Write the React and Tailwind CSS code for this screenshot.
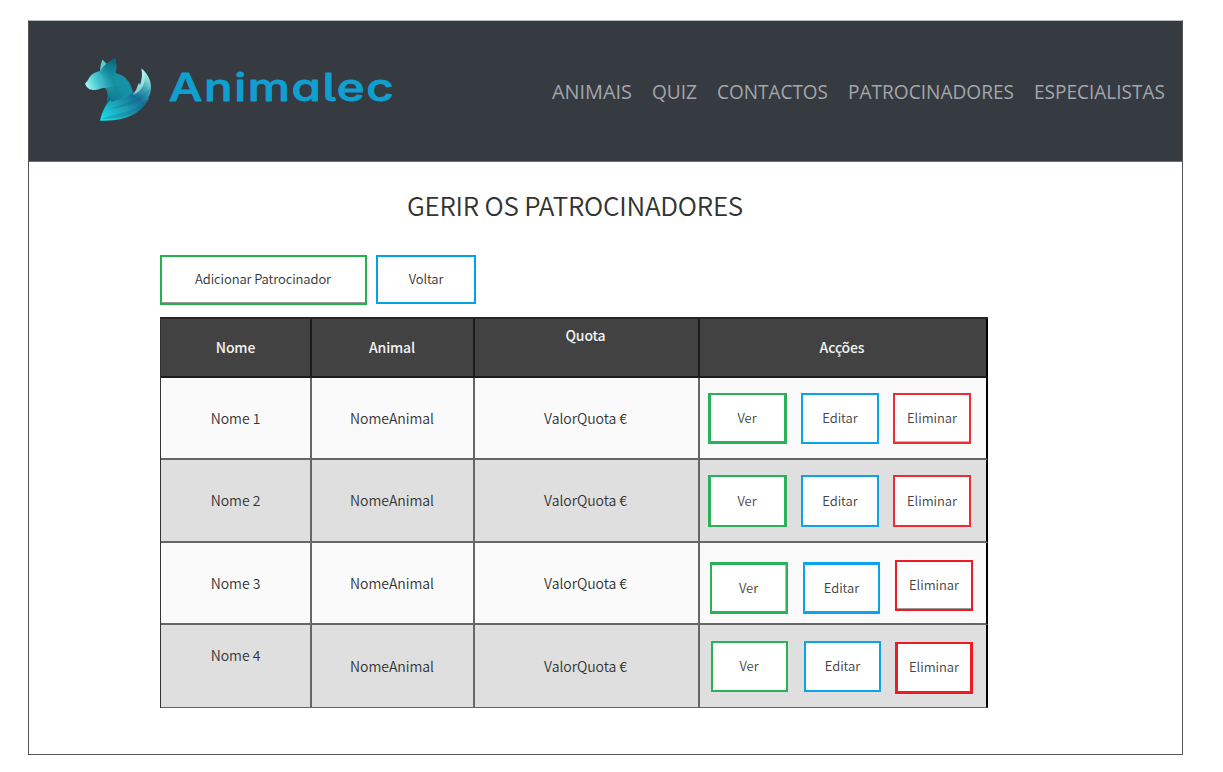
const nav = [
  ['ANIMAIS', 'w-[100px]', '80'],
  ['QUIZ', 'w-[65px]', '45'],
  ['CONTACTOS', 'w-[131px]', '111'],
  ['PATROCINADORES', 'w-[186px]', '166'],
  ['ESPECIALISTAS', 'w-[131px]', '131'],
];

const rows = [
  {
    name: 'Nome 1', box: 'h-[82px] bg-[#fafafa]', line: 'border-b-2', nameShift: '',
    actions: [
      ['Ver', 'ml-[8px] mt-[15px] w-[79px] h-[51px] border-[3px] border-t-2 border-[#2bb157] pr-[1px]'],
      ['Editar', 'ml-[14px] mt-[15px] w-[78px] h-[51px] border-2 border-[#0ba4e8] pb-[2px]'],
      ['Eliminar', 'ml-[14px] mt-[15px] w-[78px] h-[51px] border-2 border-[#ee2c35] pb-[2px] shadow-[inset_0_-1px_0_#bbb]'],
    ],
  },
  {
    name: 'Nome 2', box: 'h-[83px] bg-[#dfdfdf]', line: 'border-b-2', nameShift: '',
    actions: [
      ['Ver', 'ml-[8px] mt-[15px] w-[79px] h-[52px] border-[3px] border-y-2 border-[#2bb157] pr-[1px]'],
      ['Editar', 'ml-[14px] mt-[15px] w-[78px] h-[52px] border-2 border-[#0ba4e8] pb-[1px]'],
      ['Eliminar', 'ml-[14px] mt-[15px] w-[78px] h-[52px] border-2 border-[#ee2c35] pb-[1px]'],
    ],
  },
  {
    name: 'Nome 3', box: 'h-[82px] bg-[#fafafa]', line: 'border-b-2', nameShift: '',
    actions: [
      ['Ver', 'ml-[10px] mt-[19px] w-[78px] h-[52px] border-[3px] border-x-2 border-[#2bb157] pr-[1px] shadow-[inset_-1px_0_0_#bbb]'],
      ['Editar', 'ml-[15px] mt-[19px] w-[77px] h-[52px] border-[3px] border-x-2 border-[#0ba4e8]'],
      ['Eliminar', 'ml-[15px] mt-[17px] w-[78px] h-[51px] border-2 border-[#ed1c24] pb-[2px] shadow-[inset_0_-1px_0_#999]'],
    ],
  },
  {
    name: 'Nome 4', box: 'h-[83px] bg-[#dfdfdf]', line: 'border-b', nameShift: '-mt-[22px]',
    actions: [
      ['Ver', 'ml-[11px] mt-[16px] w-[77px] h-[51px] border-2 border-[#2bb157] pb-[2px] pr-[1px]'],
      ['Editar', 'ml-[16px] mt-[16px] w-[77px] h-[51px] border-2 border-[#0ba4e8] pb-[2px]'],
      ['Eliminar', 'ml-[14px] mt-[17px] w-[78px] h-[52px] border-[3px] border-t-2 border-[#ed1c24] pb-[1px]'],
    ],
  },
];

const cols = 'grid grid-cols-[151px_163px_225px_288px]';
const cell = 'flex items-center justify-center border-r-2';

function Fox() {
  return (
    <svg className="h-[70px] w-[75px]" viewBox="0 0 75 70">
      <defs>
        <linearGradient id="body" x1="6" y1="32" x2="42" y2="18" gradientUnits="userSpaceOnUse">
          <stop offset="0" stopColor="#a5fcf5" />
          <stop offset="0.3" stopColor="#4cc9d2" />
          <stop offset="0.7" stopColor="#168fa3" />
          <stop offset="1" stopColor="#1592a8" />
        </linearGradient>
        <linearGradient id="ear" x1="35" y1="4" x2="26" y2="28" gradientUnits="userSpaceOnUse">
          <stop offset="0" stopColor="#075f78" />
          <stop offset="1" stopColor="#1595a8" stopOpacity="0" />
        </linearGradient>
        <linearGradient id="neck" x1="28" y1="47" x2="44" y2="30" gradientUnits="userSpaceOnUse">
          <stop offset="0" stopColor="#075f78" />
          <stop offset="1" stopColor="#1595a8" stopOpacity="0" />
        </linearGradient>
        <linearGradient id="tail" x1="24" y1="66" x2="64" y2="16" gradientUnits="userSpaceOnUse">
          <stop offset="0" stopColor="#17dce6" />
          <stop offset="0.35" stopColor="#1c9fb3" />
          <stop offset="0.6" stopColor="#156f96" />
          <stop offset="0.8" stopColor="#42a8b8" />
          <stop offset="1" stopColor="#a8f8f3" />
        </linearGradient>
      </defs>
      <path d="M20 17 C20 12 21 8 22.500 4.500 L27 9.500 L25 16Z" fill="#62cbd0" />
      <path d="M5 28.500 C8 26 9 22 12 19.500 C15 17 18 16.500 20 16 C25 8.500 30 7 34.800 3.300 C36.800 8 37 14 35.500 18 C45 20 51 27 53 38 C47 45 38 46 26.500 50 C28 44 29 38 25.500 33 C21 32.500 19 35 14 35 C10 35 6.500 33 5 28.500Z" fill="url(#body)" />
      <path d="M20 17 C25 8.500 30 7 34.800 3.300 C36.800 8 37 14 35.500 18 L26 28Z" fill="url(#ear)" />
      <path d="M25.500 33 L35 31 C43 30 50 32 53 38 L32 47 L26.500 50 C28 44 29 38 25.500 33Z" fill="url(#neck)" />
      <path d="M61.500 13.500 C67 18 71 25 71 32 C71 37 69.500 41 68 43 L69 43 C60 61 43 66 20 65.800 C22 57 25 50 31 44.500 L31.500 47.500 C40 46 48 43 53.500 36 L54 38 C57 35 57 31 59 28 L60 30 C62 25 62.500 19 61.500 13.500Z" fill="url(#tail)" />
      <path d="M29 54 C42 49 59 46 70 34 C65 47 46 52 29 54Z" fill="#0c688c" opacity="0.3" />
      <path d="M22 64 C38 57 56 58 68 43 C60 61 42 63 22 64Z" fill="#0c688c" opacity="0.3" />
      <path d="M61.500 13.500 C68 22 65 35 53 40 L54 38 C57 35 57 31 59 28 L60 30 C62 25 62.500 19 61.500 13.500Z" fill="#c5fbf6" opacity="0.6" />
    </svg>
  );
}

export default function App() {
  return (
    <div className="h-[772px] w-[1223px] overflow-hidden bg-white pl-[28px] pt-[20px] font-['Noto_Sans_CJK_SC',sans-serif] text-[#333]">
      <div className="flex h-[735px] w-[1155px] flex-col border border-[#555] border-t-[#b8bfbd]">
        <header className="flex h-[141px] shrink-0 border-b border-[#6b6e70] bg-[#363a41]">
          <div className="flex shrink-0 pl-[51px] pt-[34px]">
            <Fox />
            <svg className="h-[60px] w-[240px]" viewBox="0 0 240 60" role="heading">
              <text x="11" y="46" transform="scale(1.25 1)" textLength="180" lengthAdjust="spacing" strokeWidth="0.900" strokeLinejoin="round" style={{ fontFeatureSettings: '"cv05" 1, "cv11" 1, "ss03" 1' }} className="fill-[#109fcf] stroke-[#109fcf] font-['Inter',sans-serif] text-[38px] font-medium">Animalec</text>
            </svg>
          </div>
          <nav className="ml-[157px] flex shrink-0 pt-[54px]">
            {nav.map(([label, width, len]) => (
              <a key={label} className={`${width} block h-[32px]`}>
                <svg className="h-[32px] w-full overflow-visible">
                  <text x="0" y="24" textLength={len} lengthAdjust="spacingAndGlyphs" className="fill-[#a3a6aa] font-['Open_Sans','Noto_Sans',sans-serif] text-[19.5px]">{label}</text>
                </svg>
              </a>
            ))}
          </nav>
        </header>

        <main className="pl-[131px]">
          <h1 className="ml-[247px] mt-[23px] h-[42px] whitespace-nowrap text-[26px] font-[350] leading-[40px] tracking-[-0.22px]">GERIR OS PATROCINADORES</h1>
          <div className="mt-[28px] flex h-[62px] items-start gap-[9px] text-[13px] font-[350] tracking-[-0.1px]">
            <button className="h-[50px] w-[207px] border-2 border-[#22b14c] pb-[2px] pr-[1px] shadow-[inset_0_-1px_0_#999]">Adicionar Patrocinador</button>
            <button className="h-[49px] w-[100px] border-2 border-[#00a2e8] pb-[1px]">Voltar</button>
          </div>
          <section className="w-[828px] border-l border-t-2 border-l-[#333] border-t-[#252525]">
            <div className={`${cols} h-[59px] bg-[#424242] text-[14px] font-medium tracking-[-0.15px] text-[#f2f2f2]`}>
              <div className={`${cell} border-b-2 border-[#1c1c1c]`}>Nome</div>
              <div className={`${cell} border-b-2 border-[#1c1c1c] pr-[1px]`}>Animal</div>
              <div className={`${cell} border-b-2 border-[#1c1c1c] pb-[24px] pr-[2px]`}>Quota</div>
              <div className={`${cell} border-b-2 border-[#1c1c1c] border-r-black pr-[2px]`}>Acções</div>
            </div>
            {rows.map((r) => (
              <div key={r.name} className={`${cols} ${r.box} text-[14px] font-[350] tracking-[-0.05px]`}>
                <div className={`${cell} ${r.line} border-[#666]`}><span className={r.nameShift}>{r.name}</span></div>
                <div className={`${cell} ${r.line} border-[#666] pr-[1px]`}>NomeAnimal</div>
                <div className={`${cell} ${r.line} border-[#666] pr-[2px]`}>ValorQuota €</div>
                <div className={`flex items-start border-r-2 ${r.line} border-[#666] border-r-black text-[13px]`}>
                  {r.actions.map(([label, style]) => (
                    <button key={label} className={`${style} shrink-0 bg-white text-[#444]`}>{label}</button>
                  ))}
                </div>
              </div>
            ))}
          </section>
        </main>
      </div>
    </div>
  );
}
